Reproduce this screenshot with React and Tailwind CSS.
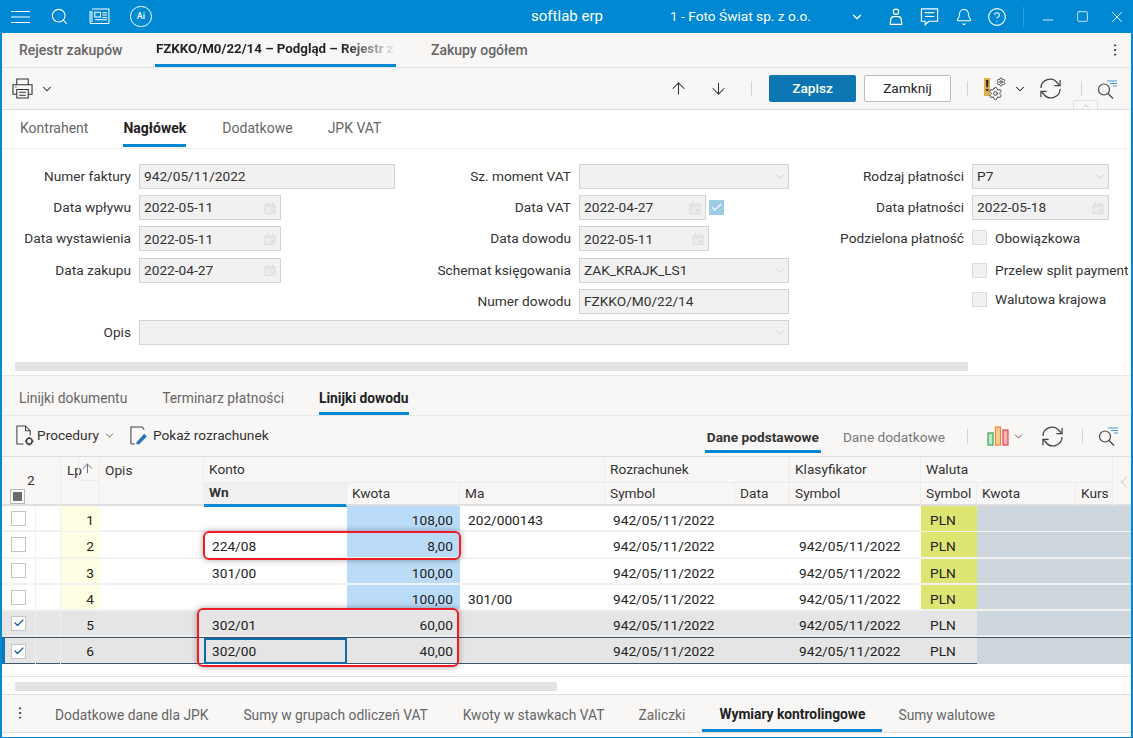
import { Search, Bell, CircleHelp, Minus, Square, X, ChevronDown, ChevronUp, ChevronLeft, ChevronRight, ArrowUp, ArrowDown, Check, EllipsisVertical, Settings } from "lucide-react";

const GRID = "grid grid-cols-[33px_26px_39px_104px_143px_113px_145px_130px_55px_131px_56px_99px_37px_1fr]";

const rows = [
  { lp: 1, wn: "", kwota: "108,00", ma: "202/000143", rozr: "942/05/11/2022", klas: "" },
  { lp: 2, wn: "224/08", kwota: "8,00", ma: "", rozr: "942/05/11/2022", klas: "942/05/11/2022" },
  { lp: 3, wn: "301/00", kwota: "100,00", ma: "", rozr: "942/05/11/2022", klas: "942/05/11/2022" },
  { lp: 4, wn: "", kwota: "100,00", ma: "301/00", rozr: "942/05/11/2022", klas: "942/05/11/2022" },
  { lp: 5, wn: "302/01", kwota: "60,00", ma: "", rozr: "942/05/11/2022", klas: "942/05/11/2022", checked: true },
  { lp: 6, wn: "302/00", kwota: "40,00", ma: "", rozr: "942/05/11/2022", klas: "942/05/11/2022", checked: true, current: true },
];

function SyncIcon({ className }) {
  return (
    <svg viewBox="0 0 24 24" className={className} fill="none" stroke="currentColor" strokeWidth="1.3">
      <path d="M2 11.5a9.5 9.5 0 0 1 17-5.5l2.5 2.5" />
      <path d="M22 3v6h-6" />
      <path d="M22 12.5a9.5 9.5 0 0 1-17 5.5l-2.5-2.5" />
      <path d="M2 21v-6h6" />
    </svg>
  );
}

function FilterSearch() {
  return (
    <svg viewBox="0 0 22 22" className="w-[22px] h-[22px] text-[#444]" fill="none" stroke="currentColor" strokeWidth="1.2">
      <circle cx="8" cy="11.5" r="5.5" />
      <path d="M12 15.5l5 5" />
      <path d="M11 3h10M14 5.5h7M17 8h4" stroke="#3d9ad6" />
    </svg>
  );
}

function CalendarMark() {
  return (
    <svg viewBox="0 0 12 12" className="w-[12px] h-[12px]" fill="#ececec" stroke="#dcdcdc" strokeWidth="1">
      <path d="M1 2.5h10v9H1zM3.5 0.5v2M8.5 0.5v2M1 4.5h10" />
      <path d="M7.5 7.5h2v2h-2z" fill="#d6d6d6" stroke="none" />
    </svg>
  );
}

function Field({ value, width = "w-full", chevron, calendar }) {
  return (
    <div className={`${width} h-[25px] bg-[#f1f1f1] border border-[#d3d3d3] flex items-center pl-1 text-[#333] overflow-hidden ${chevron ? "pr-[1px]" : "pr-[4px]"}`}>
      <span className="flex-1 whitespace-nowrap">{value}</span>
      {chevron && <ChevronDown size={15} strokeWidth={1} className="text-[#c4c4c4]" />}
      {calendar && <CalendarMark />}
    </div>
  );
}

function Label({ children }) {
  return <div className="text-right text-[#333] whitespace-nowrap leading-[25px]">{children}</div>;
}

function EmptyBox() {
  return <div className="w-[15px] h-[15px] bg-[#f1f1f1] border border-[#dcdcdc] shrink-0" />;
}

function Option({ children, className = "" }) {
  return (
    <div className={`flex items-center gap-2 h-[25px] text-[#333] whitespace-nowrap ${className}`}>
      <EmptyBox />
      <span>{children}</span>
    </div>
  );
}

function RowCheck({ checked }) {
  return (
    <div className="w-[15px] h-[15px] bg-white border border-[#c4c4c4] flex items-center justify-center">
      {checked && <Check size={12} strokeWidth={2.6} className="text-[#1f5c99]" />}
    </div>
  );
}

function TableRow({ row }) {
  const selected = row.checked;
  let pad = "pt-[4px]";
  if (selected) pad = "pt-[3px]";
  if (row.current) pad = "pt-[1px]";
  const base = `flex items-center px-2 h-full ${pad}`;
  let line = "border-b-2 border-[#f2f2f2] bg-white";
  if (selected) line = "border-b-2 border-[#eeeeee] bg-[#e5e5e5]";
  if (row.current) line = "border-y border-[#3f5566] bg-[#e5e5e5]";
  return (
    <div className={`${GRID} h-[26.3px] text-[#222] ${line}`}>
      <div className={`flex items-center justify-center h-full ${row.current ? "border-l-[3px] border-[#0d76b8] pr-[3px]" : ""}`}>
        <RowCheck checked={row.checked} />
      </div>
      <div className="h-full border-x border-[#f0f0f0]" />
      <div className={`${base} justify-end !pr-[6px] ${selected ? "" : "bg-[#ffffe3]"}`}>{row.lp}</div>
      <div className="h-full" />
      <div className={`${base} ${row.current ? "border-2 border-[#0f6ea8] !pl-[6px]" : "!pl-[8px]"}`}>{row.wn}</div>
      <div className={`${base} justify-end !pr-[7px] ${selected ? "" : "bg-[#bbdcf8]"}`}>{row.kwota}</div>
      <div className={base}>{row.ma}</div>
      <div className={base}>{row.rozr}</div>
      <div className="h-full" />
      <div className={`${base} !pl-[9px]`}>{row.klas}</div>
      <div className={`${base} !pl-[9px] ${selected ? "" : "bg-[#dde673]"}`}>PLN</div>
      <div className="col-span-3 h-full bg-[#cdd5dd]" />
    </div>
  );
}

function TableHeader() {
  const top = "h-[25px] flex items-center px-[5px] border-r border-[#ececec] text-[#333]";
  const sub = "h-[25px] flex items-center px-[5px] pb-[3px] border-r border-t border-[#ececec] text-[#333] whitespace-nowrap overflow-hidden";
  return (
    <div className={`${GRID} h-[50px] bg-[#f8f7f6] border-t border-b-2 border-[#dedede]`}>
      <div className="col-span-2 row-span-2 relative border-r border-[#ececec]">
        <span className="absolute left-[25px] top-[13px] text-[#333]">2</span>
        <div className="absolute left-[8px] top-[32px] w-[15px] h-[15px] bg-white border border-[#b8b8b8] flex items-center justify-center">
          <div className="w-[9px] h-[9px] bg-[#6b6b6b]" />
        </div>
      </div>
      <div className="row-span-2 relative border-r border-[#ececec] pl-[6px] pt-[3px] text-[#333]">
        Lp
        <div className="absolute right-0 top-0 w-[21px] h-[24px] pr-[3px] border-l border-b border-[#ececec] flex items-center justify-center">
          <ArrowUp size={15} strokeWidth={1.5} className="text-[#666]" />
        </div>
      </div>
      <div className="row-span-2 border-r border-[#ececec] pl-[5px] pt-[3px] text-[#333]">Opis</div>
      <div className={`${top} col-span-3`}>Konto</div>
      <div className={`${top} col-span-2`}>Rozrachunek</div>
      <div className={top}>Klasyfikator</div>
      <div className={`${top} col-span-3`}>Waluta</div>
      <div className="row-span-2 flex items-center justify-center pl-[1px]">
        <ChevronLeft size={20} strokeWidth={1} className="text-[#bdbdbd]" />
      </div>
      <div className={`${sub} bg-[#f0f0f0] font-bold border-b-[3px] border-b-[#0d8ad6]`}>Wn</div>
      <div className={sub}>Kwota</div>
      <div className={sub}>Ma</div>
      <div className={sub}>Symbol</div>
      <div className={sub}>Data</div>
      <div className={sub}>Symbol</div>
      <div className={sub}>Symbol</div>
      <div className={sub}>Kwota</div>
      <div className={sub}>Kurs</div>
    </div>
  );
}

function Scrollbar({ width }) {
  return (
    <div className="h-[10px] flex items-center">
      <ChevronLeft size={12} strokeWidth={1} className="text-[#dcdcdc] w-[13px] shrink-0" />
      <div className={`${width} h-[9px] bg-[#e3e3e3]`} />
      <div className="flex-1" />
      <ChevronRight size={12} strokeWidth={1} className="text-[#dcdcdc] w-[14px] shrink-0" />
    </div>
  );
}

export default function App() {
  return (
    <div className="w-[1133px] h-[738px] overflow-hidden flex flex-col bg-white border-x-2 border-b border-[#0089d2] font-['Roboto',sans-serif] text-[13.7px]">
      {/* title bar */}
      <div className="h-[33px] shrink-0 bg-[#0089d2] text-white flex items-center relative -mx-[2px]">
        <svg viewBox="0 0 20 14" className="w-[20px] h-[14px] ml-[11px]" fill="none" stroke="white" strokeWidth="1.2"><path d="M0 1.5h19M0 7h19M0 12.5h19" /></svg>
        <Search size={19} strokeWidth={1.4} className="ml-[19px]" />
        <svg viewBox="0 0 22 18" className="w-[21px] h-[17px] ml-[20px]" fill="none" stroke="white" strokeWidth="1.1">
          <path d="M3 1h18v15.5H2.5A1.5 1.5 0 0 1 1 15V4h2v11" />
          <path d="M6 4.5h6v5H6zM14 5h5M14 7.5h5M14 10h5M6 12.5h13" />
        </svg>
        <div className="ml-[20px] w-[22px] h-[21px] rounded-full border border-white flex items-center justify-center text-[9px] font-medium">Ai</div>
        <div className="ml-[365px] w-[100px] text-center text-[15px]">softlab erp</div>
        <div className="ml-[53px] whitespace-nowrap text-[13.7px]">1 - Foto Świat sp. z o.o.</div>
        <ChevronDown size={14} strokeWidth={2.2} className="ml-[39px]" />
        <svg viewBox="0 0 16 20" className="w-[14px] h-[18px] ml-[25px]" fill="none" stroke="white" strokeWidth="1.4">
          <circle cx="8" cy="4" r="3" /><path d="M5 9.5h6q3 0 3.2 5l.3 4h-13l.3-4q.2-5 3.2-5z" />
        </svg>
        <svg viewBox="0 0 20 20" className="w-[19px] h-[19px] ml-[17px]" fill="none" stroke="white" strokeWidth="1.3">
          <path d="M1.5 2h17v13h-9l-4 3.5V15h-4z" /><path d="M5 6h10M5 10h10" />
        </svg>
        <Bell size={18} strokeWidth={1.4} className="ml-[16px]" />
        <CircleHelp size={20} strokeWidth={1.3} className="ml-[14px]" />
        <div className="w-px h-[20px] bg-[#2a9fdd] ml-[16px]" />
        <Minus size={16} strokeWidth={1.2} className="ml-[16px] mt-[6px]" />
        <Square size={13} strokeWidth={1.4} className="ml-[20px]" />
        <X size={18} strokeWidth={1.2} className="ml-[19px]" />
      </div>

      {/* document tabs */}
      <div className="h-[35px] shrink-0 bg-[#f8f7f6] border-b border-[#e4e4e4] flex items-stretch text-[14px] text-[#666] relative font-medium">
        <div className="pl-[17px] w-[153px] flex items-center">Rejestr zakupów</div>
        <div className="w-[241px] h-[34px] flex items-center border-b-[3px] border-[#0089d2] whitespace-nowrap">
          <span className="inline-block pl-[1px] text-[13.3px] font-bold bg-gradient-to-r from-[#222] from-78% to-[#e8e8e8] bg-clip-text text-transparent">FZKKO/M0/22/14 – Podgląd – Rejestr z</span>
        </div>
        <div className="ml-[35px] flex items-center">Zakupy ogółem</div>
        <div className="flex-1" />
        <EllipsisVertical size={16} strokeWidth={1.5} className="self-center mr-[8px] text-[#333]" />
      </div>

      {/* toolbar */}
      <div className="h-[42px] shrink-0 bg-[#f8f7f6] border-b border-[#dedede] flex items-center relative">
        <svg viewBox="0 0 22 22" className="w-[21px] h-[21px] ml-[10px]" fill="none" stroke="#333" strokeWidth="1.1">
          <path d="M5 7V1h12v6M5 17H1V7h20v10h-4" />
          <path d="M5 12h12v9H5zM7.5 15h7M7.5 18h7" />
          <path d="M3 9.5h2" stroke="#1c8ad0" />
        </svg>
        <ChevronDown size={14} strokeWidth={1.8} className="ml-[7px] text-[#222]" />
        <div className="flex-1" />
        <ArrowUp size={19} strokeWidth={1.3} className="text-[#333]" />
        <ArrowDown size={19} strokeWidth={1.3} className="ml-[21px] text-[#333]" />
        <div className="w-px h-[15px] bg-[#d4d4d4] ml-[23px]" />
        <div className="ml-[17px] w-[87px] h-[27px] rounded-[2px] bg-[#0c76b2] text-white font-medium flex items-center justify-center">Zapisz</div>
        <div className="ml-[8px] w-[87px] h-[27px] rounded-[2px] bg-white border border-[#bdbdbd] text-[#222] flex items-center justify-center">Zamknij</div>
        <div className="w-px h-[15px] bg-[#d4d4d4] ml-[16px]" />
        <div className="relative w-[24px] h-[24px] ml-[16px]">
          <div className="absolute left-0 top-[1px] w-[6px] h-[18px] bg-[#e0b050] text-[#222] flex items-center justify-center font-bold text-[15px] leading-none">!</div>
          <Settings size={15} strokeWidth={1.6} className="absolute left-[4px] top-[9px] text-[#444]" />
          <Settings size={10} strokeWidth={2} className="absolute left-[12px] top-0 text-[#333]" />
        </div>
        <ChevronDown size={14} strokeWidth={1.8} className="ml-[5px] text-[#222]" />
        <SyncIcon className="w-[23px] h-[23px] ml-[12px] text-[#444]" />
        <div className="w-px h-[15px] bg-[#d4d4d4] ml-[19px]" />
        <div className="ml-[14px] mr-[13px]"><FilterSearch /></div>
        <div className="absolute right-[33px] bottom-0 w-[25px] h-[9px] border border-b-0 border-[#dedede] rounded-t-[2px] flex justify-center overflow-hidden">
          <ChevronUp size={10} strokeWidth={1.5} className="text-[#aaa]" />
        </div>
      </div>

      {/* header tabs */}
      <div className="h-[38px] shrink-0 flex items-stretch text-[14px] text-[#666]">
        <div className="ml-[18px] pb-[2px] flex items-center">Kontrahent</div>
        <div className="ml-[35px] flex items-center border-b-[3px] border-[#0089d2] text-[#222] font-bold h-[35px] mt-[2px]">Nagłówek</div>
        <div className="ml-[36px] pb-[2px] flex items-center">Dodatkowe</div>
        <div className="ml-[35px] pb-[2px] flex items-center">JPK VAT</div>
      </div>

      {/* form */}
      <div className="h-[213px] shrink-0 pt-[15px] border-t border-[#f0f0f0]">
        <div className="grid grid-cols-[129px_256px_168px_210px_167px_150px] gap-x-2 auto-rows-[31.2px]">
          <Label>Numer faktury</Label>
          <Field value="942/05/11/2022" />
          <Label>Sz. moment VAT</Label>
          <Field value="" chevron />
          <Label>Rodzaj płatności</Label>
          <Field value="P7" chevron width="w-[137px]" />

          <Label>Data wpływu</Label>
          <Field value="2022-05-11" calendar width="w-[142px]" />
          <Label>Data VAT</Label>
          <div className="flex gap-[3px]">
            <Field value="2022-04-27" calendar width="w-[127px]" />
            <div className="w-[15px] h-[15px] mt-[5px] bg-[#9ccbe6] flex items-center justify-center">
              <Check size={13} strokeWidth={2} className="text-white" />
            </div>
          </div>
          <Label>Data płatności</Label>
          <Field value="2022-05-18" calendar width="w-[137px]" />

          <Label>Data wystawienia</Label>
          <Field value="2022-05-11" calendar width="w-[142px]" />
          <Label>Data dowodu</Label>
          <Field value="2022-05-11" calendar width="w-[130px]" />
          <Label>Podzielona płatność</Label>
          <Option className="-mt-[1px]">Obowiązkowa</Option>

          <Label>Data zakupu</Label>
          <Field value="2022-04-27" calendar width="w-[142px]" />
          <Label>Schemat księgowania</Label>
          <Field value="ZAK_KRAJK_LS1" chevron />
          <div />
          <Option>Przelew split payment</Option>

          <div />
          <div />
          <Label>Numer dowodu</Label>
          <Field value="FZKKO/M0/22/14" />
          <div />
          <Option className="-mt-[2px]">Walutowa krajowa</Option>

          <Label>Opis</Label>
          <div className="col-span-3">
            <Field value="" chevron />
          </div>
        </div>
      </div>

      <Scrollbar width="w-[953px]" />

      {/* line tabs */}
      <div className="h-[41px] mt-[4px] shrink-0 pt-[5px] bg-[#f8f7f6] border-t border-[#e8e8e8] border-b flex items-stretch text-[13.8px] text-[#666]">
        <div className="ml-[17px] flex items-center">Linijki dokumentu</div>
        <div className="ml-[35px] flex items-center">Terminarz płatności</div>
        <div className="ml-[35px] flex items-center font-bold text-[#222] border-b-[3px] border-[#0089d2] pt-[3px]">Linijki dowodu</div>
      </div>

      {/* line toolbar */}
      <div className="h-[40px] shrink-0 bg-[#f8f7f6] flex items-center text-[#333]">
        <svg viewBox="0 0 20 22" className="w-[19px] h-[21px] ml-[13px] -mt-[2px]" fill="none" stroke="#444" strokeWidth="1.1">
          <path d="M9 20H2V1h9l5 5v5M11 1v5h5" />
          <circle cx="15" cy="17" r="3" strokeWidth="1.6" />
          <path d="M15 12.5v1.5M15 20v1.5M10.5 17h1.5M18 17h1.5" strokeWidth="1.6" />
        </svg>
        <span className="ml-[3px] -mt-[2px]">Procedury</span>
        <ChevronDown size={13} strokeWidth={1.3} className="ml-[4px] -mt-[2px]" />
        <svg viewBox="0 0 20 22" className="w-[19px] h-[21px] ml-[13px] -mt-[2px]" fill="none" stroke="#444" strokeWidth="1.1">
          <path d="M2 20V2h12l2 3M2 20h4" />
          <path d="M8 19l8-9 2 2-8 8z" fill="#2a72b8" stroke="#2a72b8" />
        </svg>
        <span className="ml-[5px] -mt-[2px]">Pokaż rozrachunek</span>
        <div className="flex-1" />
        <div className="h-[37px] self-start flex items-center font-bold border-b-[3px] border-[#0089d2] pt-[8px] px-[2px] text-[#333]">Dane podstawowe</div>
        <span className="ml-[22px] mt-[2px] text-[#777]">Dane dodatkowe</span>
        <div className="w-px h-[15px] bg-[#d4d4d4] ml-[22px]" />
        <svg viewBox="0 0 22 20" className="w-[22px] h-[20px] ml-[19px]" fill="none" strokeWidth="1.2">
          <rect x="1" y="7" width="5" height="12" stroke="#2fa84f" fill="#bfe6c8" />
          <rect x="8.5" y="1" width="5" height="18" stroke="#ef8a2e" fill="#f9cf9f" />
          <rect x="16" y="4" width="5" height="15" stroke="#e8474c" fill="#f6b5b7" />
        </svg>
        <ChevronDown size={13} strokeWidth={1.4} className="ml-[3px]" />
        <SyncIcon className="w-[23px] h-[23px] ml-[16px] text-[#444]" />
        <div className="w-px h-[15px] bg-[#d4d4d4] ml-[18px]" />
        <div className="ml-[14px] mr-[12px]"><FilterSearch /></div>
      </div>

      {/* grid */}
      <div className="relative shrink-0">
        <TableHeader />
        {rows.map((row) => <TableRow key={row.lp} row={row} />)}
        <div className="absolute left-[201px] top-[75px] w-[258px] h-[29px] rounded-[6px] border-2 border-[#ee1c25] shadow-[0_0_6px_rgba(0,0,0,0.35)]" />
        <div className="absolute left-[195px] top-[152px] w-[262px] h-[59px] rounded-[6px] border-2 border-[#ee1c25] shadow-[0_0_6px_rgba(0,0,0,0.35)]" />
      </div>

      <div className="h-[13px] shrink-0 border-b border-[#e4e4e4]" />
      <div className="mt-[5px] shrink-0"><Scrollbar width="w-[542px]" /></div>
      <div className="h-[3px] shrink-0 border-b border-[#dedede]" />

      {/* bottom tabs */}
      <div className="h-[38px] shrink-0 bg-[#f8f7f6] border-b border-[#dedede] flex items-stretch text-[13.8px] text-[#666]">
        <EllipsisVertical size={16} strokeWidth={1.5} className="self-center ml-[10px] text-[#333]" />
        <div className="ml-[27px] pt-[4px] flex items-center">Dodatkowe dane dla JPK</div>
        <div className="ml-[35px] pt-[4px] flex items-center">Sumy w grupach odliczeń VAT</div>
        <div className="ml-[35px] pt-[4px] flex items-center">Kwoty w stawkach VAT</div>
        <div className="ml-[34px] pt-[4px] flex items-center">Zaliczki</div>
        <div className="ml-[17px] px-[17px] pt-[6px] flex items-center font-bold text-[#222] border-b-[3px] border-[#0089d2]">Wymiary kontrolingowe</div>
        <div className="ml-[16px] pt-[4px] flex items-center">Sumy walutowe</div>
      </div>
    </div>
  );
}
